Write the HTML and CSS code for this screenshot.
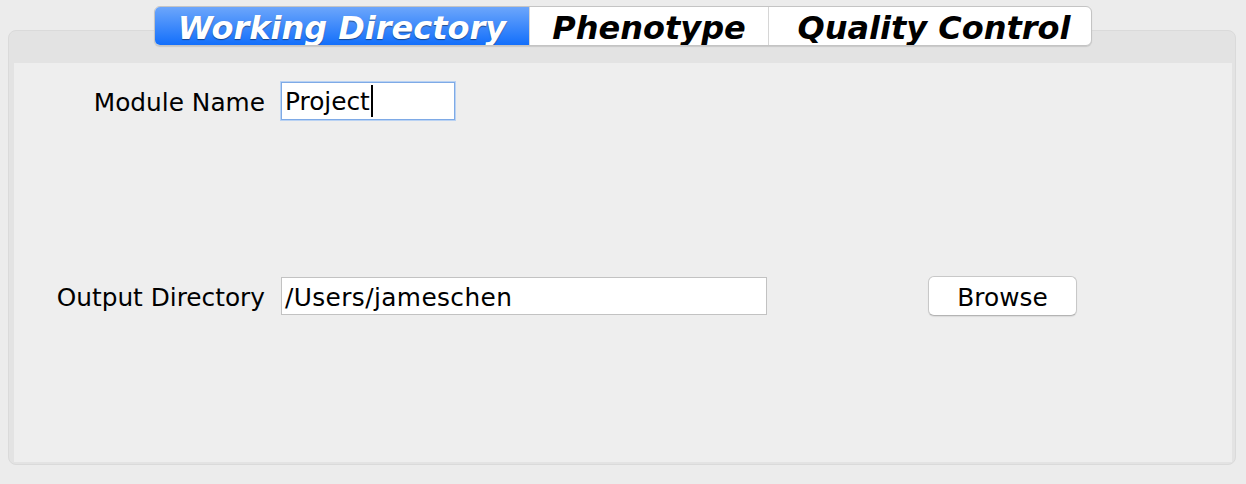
FILE: index.html
```html
<!DOCTYPE html>
<html>
<head>
<meta charset="utf-8">
<link rel="stylesheet" href="styles.css">
</head>
<body>
<div class="tabs">
  <div class="tab tab-active">Working Directory</div>
  <div class="tab tab-pheno">Phenotype</div>
  <div class="tab tab-qc">Quality Control</div>
</div>
<div class="panel">
  <div class="content">
    <div class="row row-module">
      <div class="label">Module Name</div>
      <div class="field field-focus">Project<span class="caret"></span></div>
    </div>
    <div class="row row-output">
      <div class="label">Output Directory</div>
      <div class="field field-wide">/Users/jameschen</div>
      <div class="button">Browse</div>
    </div>
  </div>
</div>
</body>
</html>
```
FILE: styles.css
```css
html, body {
  margin: 0;
  padding: 0;
  background: #ececec;
}
body {
  width: 1246px;
  height: 484px;
  overflow: hidden;
  padding-top: 6px;
  box-sizing: border-box;
  font-family: "DejaVu Sans", "Liberation Sans", sans-serif;
  color: #000;
}
.tabs {
  position: relative;
  z-index: 1;
  display: flex;
  width: max-content;
  margin: 0 auto;
  height: 40px;
  box-sizing: border-box;
  border: 1px solid #c4c4c4;
  border-radius: 6px;
  background: #fff;
  box-shadow: 0 1px 1px rgba(0,0,0,0.12);
  overflow: hidden;
}
.tab {
  display: flex;
  align-items: center;
  justify-content: center;
  font-weight: bold;
  font-style: italic;
  font-size: 32px;
  line-height: 1;
  padding-top: 3px;
  color: #000;
  border-left: 1px solid #d6d6d6;
  box-sizing: border-box;
  white-space: nowrap;
}
.tab-active {
  border-left: none;
  width: 374px;
  color: #fff;
  background: linear-gradient(#6ca6fb, #136ffb);
  text-shadow: 0 1px 1px rgba(0,0,0,0.45);
}
.tab-pheno { width: 239px; }
.tab-qc { width: 323px; padding-left: 8px; }
.panel {
  margin: -16px 10px 0 8px;
  height: 435px;
  box-sizing: border-box;
  background: #e3e3e3;
  border: 1px solid #dadada;
  border-radius: 8px;
  padding: 32px 3px 2px 5px;
}
.content {
  background: #eeeeee;
  height: 100%;
  box-sizing: border-box;
  padding-top: 19px;
}
.row {
  display: flex;
  align-items: center;
  font-size: 24.8px;
}
.row-output {
  margin-top: 156px;
}
.label {
  width: 251px;
  text-align: right;
  margin-right: 16px;
  white-space: nowrap;
  padding-top: 2px;
}
.field {
  height: 38px;
  box-sizing: border-box;
  background: #fff;
  border: 1px solid #c2c2c2;
  padding: 2px 3px 0;
  display: flex;
  align-items: center;
  white-space: nowrap;
  letter-spacing: 0.4px;
}
.field-focus {
  width: 174px;
  border: 1px solid #7eaae6;
  box-shadow: 0 0 0 1px #b9d2f3;
  letter-spacing: 0;
  padding-top: 0;
}
.caret {
  display: inline-block;
  width: 2px;
  height: 32px;
  background: #000;
  margin-left: 1px;
}
.field-wide {
  width: 486px;
}
.button {
  margin-left: 161px;
  width: 149px;
  height: 40px;
  padding-top: 2px;
  box-sizing: border-box;
  background: #fff;
  border: 1px solid #c8c8c8;
  border-bottom-color: #b4b4b4;
  border-radius: 6px;
  box-shadow: 0 1px 1px rgba(0,0,0,0.08);
  display: flex;
  align-items: center;
  justify-content: center;
}
```
